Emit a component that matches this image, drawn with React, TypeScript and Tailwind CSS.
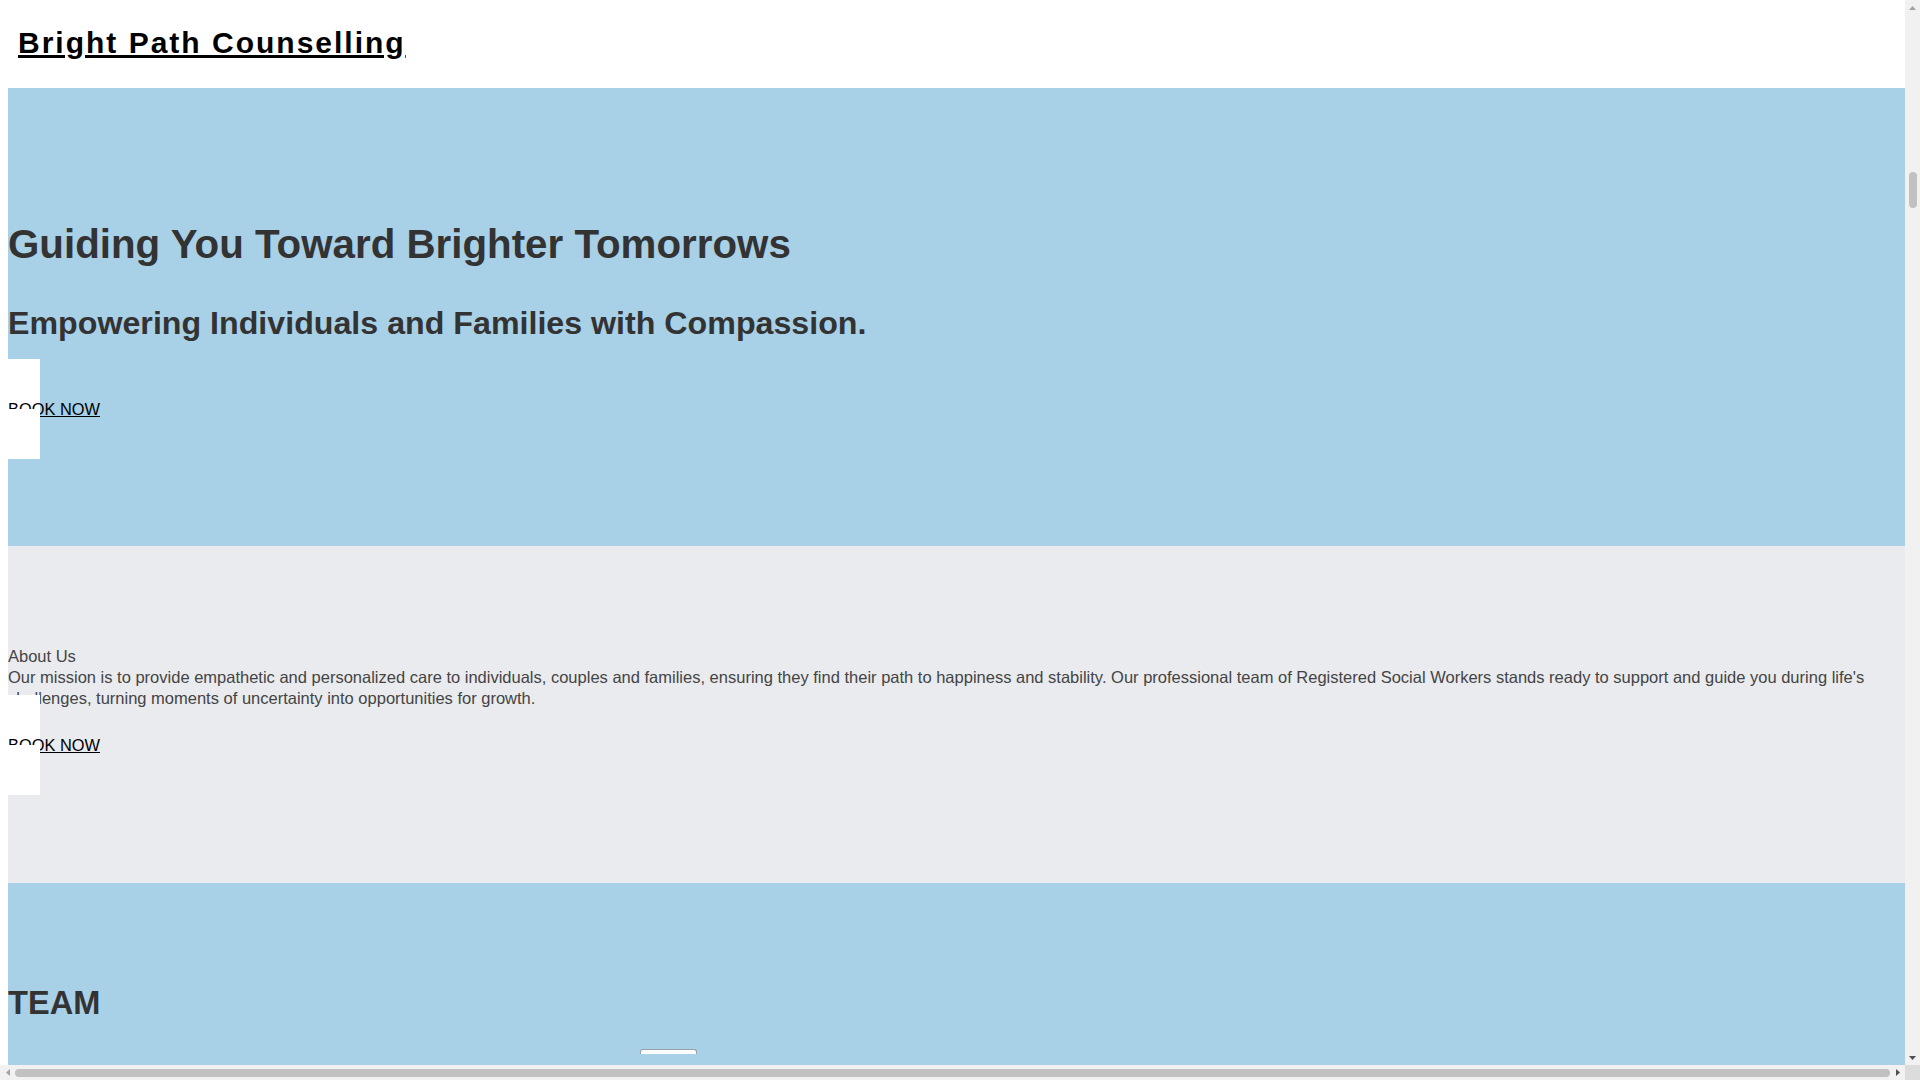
import React from "react";

function BookNow() {
  return (
    <div className="relative flex h-[100px] w-[32px] items-center bg-white">
      <a href="#" className="whitespace-nowrap text-[16.4px] leading-[18px] text-black underline">
        BOOK NOW
      </a>
      <div className="absolute left-0 top-[50px] h-[12px] w-[32px] bg-white" />
    </div>
  );
}

function Scrollbars() {
  return (
    <>
      <div className="fixed right-0 top-0 bottom-[15px] z-50 flex w-[15px] flex-col bg-[#f1f1f1]">
        <div className="flex h-[15px] items-center justify-center">
          <svg width="7" height="4" viewBox="0 0 7 4"><path d="M3.5 0L7 4H0z" fill="#a3a3a3" /></svg>
        </div>
        <div className="mx-auto mt-[157px] h-[36px] w-[8px] rounded-[4px] bg-[#c1c1c1]" />
        <div className="flex-1" />
        <div className="flex h-[15px] items-center justify-center">
          <svg width="7" height="4" viewBox="0 0 7 4"><path d="M0 0H7L3.5 4z" fill="#505050" /></svg>
        </div>
      </div>
      <div className="fixed left-0 right-[15px] bottom-0 z-50 flex h-[15px] items-center bg-[#f1f1f1]">
        <div className="flex h-[15px] w-[15px] items-center justify-center">
          <svg width="4" height="7" viewBox="0 0 4 7"><path d="M0 3.5L4 0V7z" fill="#a3a3a3" /></svg>
        </div>
        <div className="h-[8px] flex-1 rounded-[4px] bg-[#c1c1c1]" />
        <div className="flex h-[15px] w-[15px] items-center justify-center">
          <svg width="4" height="7" viewBox="0 0 4 7"><path d="M4 3.5L0 0V7z" fill="#505050" /></svg>
        </div>
      </div>
      <div className="fixed right-0 bottom-0 z-50 h-[15px] w-[15px] bg-[#dcdcdc]" />
    </>
  );
}

export default function App() {
  return (
    <div className="min-h-screen bg-white pl-2 font-['Liberation_Sans',Arial,sans-serif]">
      <div className="w-[1897px]">
        <header className="flex h-[88px] items-center bg-white pb-[3px] pl-[10px]">
          <a href="#" className="text-[30px] font-bold tracking-[2px] text-black underline">
            Bright Path Counselling
          </a>
        </header>

        <section className="bg-[#a8d0e6] pt-[134px] pb-[87px]">
          <h1 className="text-[40.3px] font-bold leading-[46px] text-[#333]">
            Guiding You Toward Brighter Tomorrows
          </h1>
          <h2 className="mt-[37px] text-[32.2px] font-bold leading-[37px] text-[#333]">
            Empowering Individuals and Families with Compassion.
          </h2>
          <div className="mt-[17px]">
            <BookNow />
          </div>
        </section>

        <section className="bg-[#eaebef] pt-[100px] pb-[88px]">
          <div className="text-[16.5px] leading-[21px] text-[#444]">About Us</div>
          <p className="text-[16.5px] leading-[21px] text-[#444]">
            Our mission is to provide empathetic and personalized care to individuals, couples and families, ensuring they find their path to happiness and stability. Our professional team of Registered Social Workers stands ready to support and guide you during life's challenges, turning moments of uncertainty into opportunities for growth.
          </p>
          <div className="relative -mt-[14px]">
            <BookNow />
          </div>
        </section>

        <section className="bg-[#a8d0e6] pt-[101px] pb-[300px]">
          <h2 className="text-[32.6px] font-bold leading-[37px] text-[#333]">TEAM</h2>
          <div className="mt-[28px] grid grid-cols-[632px_632px_633px]">
            <div />
            <div>
              <div className="h-[5px] w-[57px] rounded-t-[3px] border border-b-0 border-[#9aa0a8] bg-white" />
            </div>
            <div />
          </div>
        </section>
      </div>
      <div className="h-px w-[1922px]" />
      <Scrollbars />
    </div>
  );
}
